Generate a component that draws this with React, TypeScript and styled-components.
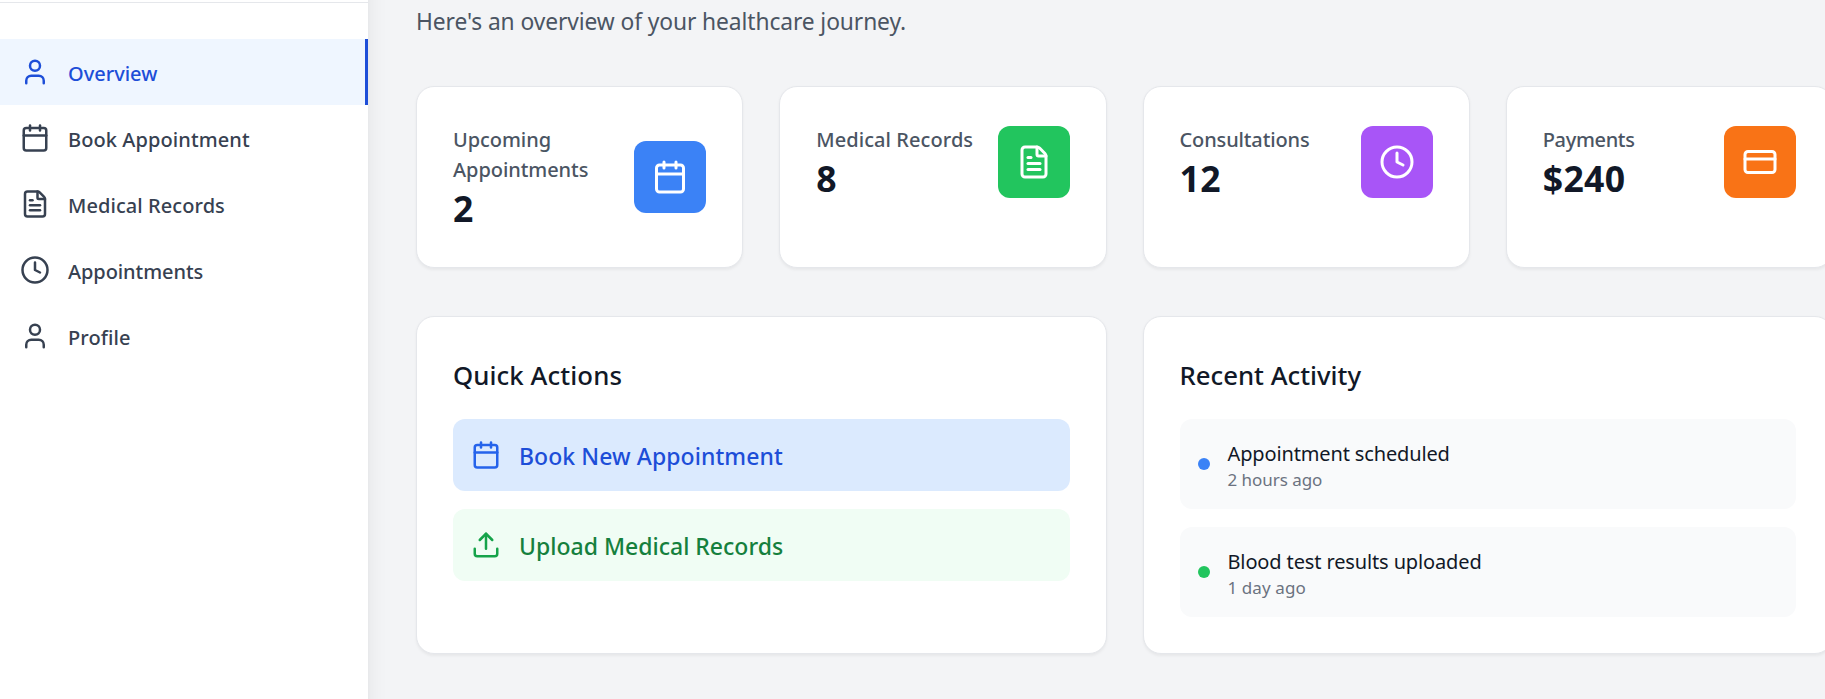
import React from 'react';
import styled, { createGlobalStyle } from 'styled-components';
import { Calendar, Clock, CreditCard, FileText, Upload, User, type LucideIcon } from 'lucide-react';

const GlobalStyle = createGlobalStyle`
  *, *::before, *::after { box-sizing: border-box; }
  body {
    margin: 0;
    overflow: hidden;
    background: #f3f4f6;
    font-family: 'Noto Sans', 'Open Sans', sans-serif;
  }
  button { font: inherit; border: 0; text-align: left; cursor: pointer; }
  h2, p { margin: 0; font-weight: inherit; }
`;

const Page = styled.div`
  display: flex;
  height: 699px;
  overflow: hidden;
`;

const Sidebar = styled.aside`
  flex: 0 0 368px;
  margin: -60px 0;
  padding-top: 60px;
  background: #fff;
  box-shadow: 0 15px 22.5px -4.5px rgba(0, 0, 0, 0.1), 0 6px 9px -6px rgba(0, 0, 0, 0.1);
  z-index: 1;
`;

const SidebarHeader = styled.div`
  height: 3px;
  border-bottom: 1px solid #e5e7eb;
`;

const Nav = styled.nav`
  display: flex;
  flex-direction: column;
  padding-top: 36px;
`;

const NavItem = styled.button<{ $active?: boolean }>`
  display: flex;
  align-items: center;
  gap: 18px;
  height: 66px;
  padding: 0 ${(p) => (p.$active ? 15 : 18)}px 0 20px;
  background: ${(p) => (p.$active ? '#eff6ff' : 'transparent')};
  color: ${(p) => (p.$active ? '#1d4ed8' : '#374151')};
  border-right: ${(p) => (p.$active ? '3px solid #1d4ed8' : '0')};
`;

const NavLabel = styled.span<{ $track: number }>`
  font-size: 20px;
  line-height: 30px;
  font-weight: 500;
  letter-spacing: ${(p) => p.$track}px;
  padding-top: 4px;
`;

const Main = styled.main`
  flex: none;
  width: 1513px;
  padding: 2px 48px 0;
`;

const Intro = styled.p`
  font-size: 22.8px;
  line-height: 36px;
  letter-spacing: -0.1px;
  color: #4b5563;
  padding-top: 2px;
  margin-bottom: 46px;
`;

const StatGrid = styled.section`
  display: grid;
  grid-template-columns: repeat(4, 1fr);
  gap: 36px;
`;

const PanelGrid = styled.section`
  display: grid;
  grid-template-columns: repeat(2, 1fr);
  gap: 36px;
  margin-top: 48px;
`;

const Card = styled.article`
  background: #fff;
  border: 1px solid #e5e7eb;
  border-radius: 18px;
  padding: 36px;
  box-shadow: 0 1.5px 3px rgba(0, 0, 0, 0.05);
`;

const StatBody = styled.div`
  display: flex;
  align-items: center;
  justify-content: space-between;
`;

const StatText = styled.div`
  display: flex;
  flex-direction: column;
  padding-top: 2px;
  margin-bottom: -1px;
`;

const StatLabel = styled.p<{ $track: number }>`
  font-size: 20px;
  line-height: 30px;
  font-weight: 500;
  letter-spacing: ${(p) => p.$track}px;
  color: #4b5563;
  margin-bottom: -1px;
`;

const StatValue = styled.p`
  font-size: 35.6px;
  line-height: 48px;
  font-weight: 700;
  letter-spacing: 0.3px;
  color: #111827;
`;

const StatIcon = styled.div<{ $color: string }>`
  display: grid;
  place-items: center;
  flex: none;
  width: 72px;
  height: 72px;
  border-radius: 12px;
  color: #fff;
  background: ${(p) => p.$color};
`;

const PanelTitle = styled.h2<{ $track: number }>`
  font-size: 25.75px;
  line-height: 42px;
  font-weight: 500;
  letter-spacing: ${(p) => p.$track}px;
  color: #111827;
  padding-top: 1px;
  margin-bottom: 23px;
`;

const Stack = styled.div`
  display: flex;
  flex-direction: column;
  gap: 18px;
`;

const ActionButton = styled.button<{ $bg: string; $icon: string }>`
  display: flex;
  align-items: center;
  gap: 18px;
  height: 72px;
  padding: 0 18px;
  border-radius: 12px;
  background: ${(p) => p.$bg};
  color: ${(p) => p.$icon};
`;

const ActionLabel = styled.span<{ $color: string; $track: number }>`
  font-size: 23px;
  line-height: 36px;
  font-weight: 500;
  letter-spacing: ${(p) => p.$track}px;
  color: ${(p) => p.$color};
  padding-top: 2px;
`;

const Activity = styled.div`
  display: flex;
  align-items: center;
  gap: 18px;
  height: 90px;
  padding: 18px;
  border-radius: 12px;
  background: #f9fafb;
`;

const ActivityText = styled.div`
  padding-top: 2px;
  margin-bottom: -1px;
`;

const Dot = styled.span<{ $color: string }>`
  width: 12px;
  height: 12px;
  border-radius: 50%;
  background: ${(p) => p.$color};
`;

const ActivityTitle = styled.p<{ $track: number }>`
  font-size: 20px;
  line-height: 30px;
  letter-spacing: ${(p) => p.$track}px;
  color: #111827;
  margin-bottom: -1px;
`;

const ActivityTime = styled.p<{ $track: number }>`
  font-size: 17px;
  line-height: 24px;
  letter-spacing: ${(p) => p.$track}px;
  color: #6b7280;
`;

interface Item { label: string; icon: LucideIcon; track: number }

const navItems: Item[] = [
  { label: 'Overview', icon: User, track: 0 },
  { label: 'Book Appointment', icon: Calendar, track: 0.09 },
  { label: 'Medical Records', icon: FileText, track: 0.07 },
  { label: 'Appointments', icon: Clock, track: -0.08 },
  { label: 'Profile', icon: User, track: 0.1 },
];

const stats: (Item & { value: string; color: string })[] = [
  { label: 'Upcoming Appointments', value: '2', icon: Calendar, color: '#3b82f6', track: -0.06 },
  { label: 'Medical Records', value: '8', icon: FileText, color: '#22c55e', track: 0.07 },
  { label: 'Consultations', value: '12', icon: Clock, color: '#a855f7', track: -0.13 },
  { label: 'Payments', value: '$240', icon: CreditCard, color: '#f97316', track: -0.34 },
];

const actions: (Item & { bg: string; iconColor: string; color: string })[] = [
  { label: 'Book New Appointment', icon: Calendar, bg: '#dbeafe', iconColor: '#2563eb', color: '#1d4ed8', track: 0.07 },
  { label: 'Upload Medical Records', icon: Upload, bg: '#f0fdf4', iconColor: '#16a34a', color: '#15803d', track: 0 },
];

const activities = [
  { title: 'Appointment scheduled', time: '2 hours ago', dot: '#3b82f6', track: -0.14, timeTrack: -0.04 },
  { title: 'Blood test results uploaded', time: '1 day ago', dot: '#22c55e', track: -0.13, timeTrack: 0.09 },
];

export default function App() {
  return (
    <>
      <GlobalStyle />
      <Page>
        <Sidebar>
          <SidebarHeader />
          <Nav>
            {navItems.map(({ label, icon: Icon, track }, i) => (
              <NavItem key={label} $active={i === 0}>
                <Icon size={30} />
                <NavLabel $track={track}>{label}</NavLabel>
              </NavItem>
            ))}
          </Nav>
        </Sidebar>
        <Main>
          <Intro>Here's an overview of your healthcare journey.</Intro>
          <StatGrid>
            {stats.map(({ label, value, icon: Icon, color, track }) => (
              <Card key={label}>
                <StatBody>
                  <StatText>
                    <StatLabel $track={track}>{label}</StatLabel>
                    <StatValue>{value}</StatValue>
                  </StatText>
                  <StatIcon $color={color}>
                    <Icon size={36} />
                  </StatIcon>
                </StatBody>
              </Card>
            ))}
          </StatGrid>
          <PanelGrid>
            <Card>
              <PanelTitle $track={0.1}>Quick Actions</PanelTitle>
              <Stack>
                {actions.map(({ label, icon: Icon, bg, iconColor, color, track }) => (
                  <ActionButton key={label} $bg={bg} $icon={iconColor}>
                    <Icon size={30} />
                    <ActionLabel $color={color} $track={track}>{label}</ActionLabel>
                  </ActionButton>
                ))}
              </Stack>
            </Card>
            <Card>
              <PanelTitle $track={0}>Recent Activity</PanelTitle>
              <Stack>
                {activities.map((a) => (
                  <Activity key={a.title}>
                    <Dot $color={a.dot} />
                    <ActivityText>
                      <ActivityTitle $track={a.track}>{a.title}</ActivityTitle>
                      <ActivityTime $track={a.timeTrack}>{a.time}</ActivityTime>
                    </ActivityText>
                  </Activity>
                ))}
              </Stack>
            </Card>
          </PanelGrid>
        </Main>
      </Page>
    </>
  );
}
